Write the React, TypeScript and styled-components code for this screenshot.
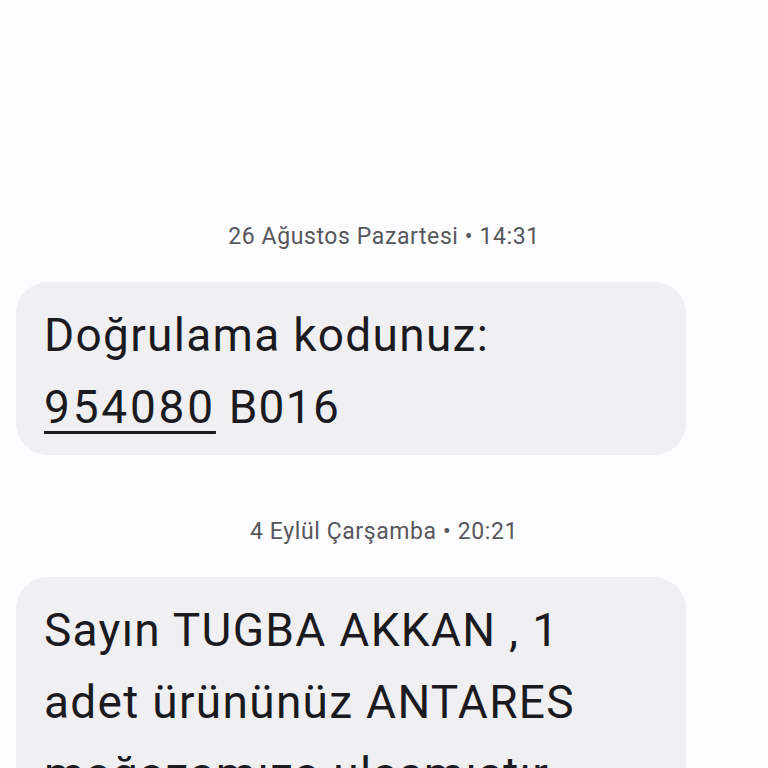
import React from 'react';
import styled, { createGlobalStyle } from 'styled-components';

const GlobalStyle = createGlobalStyle`
  html, body {
    margin: 0;
    padding: 0;
    background: #fdfcff;
    font-family: Roboto, "Noto Sans", "Liberation Sans", sans-serif;
  }
`;

const Thread = styled.div`
  display: flex;
  flex-direction: column;
  gap: 62px;
  padding: 222px 82px 0 16px;
  height: 768px;
  box-sizing: border-box;
  overflow: hidden;
`;

const Group = styled.div`
  display: flex;
  flex-direction: column;
  gap: 30px;
`;

const DateLabel = styled.div`
  text-align: center;
  margin-right: -66px;
  font-size: 23px;
  line-height: 30px;
  letter-spacing: 0.6px;
  color: #57575c;
`;

const Bubble = styled.div`
  background: #f0f0f3;
  border-radius: 32px;
  padding: 17px 28px 12px;
  color: #1b1b1f;
  font-size: 46px;
  line-height: 72px;
  letter-spacing: 1.3px;
`;

const Line = styled.div`
  white-space: nowrap;
`;

const Code = styled.span`
  letter-spacing: 2.8px;
  text-decoration: underline;
  text-decoration-thickness: 3px;
  text-underline-offset: 8px;
`;

type Message = {
  date: string;
  lines: React.ReactNode[];
};

const messages: Message[] = [
  {
    date: '26 Ağustos Pazartesi • 14:31',
    lines: [
      'Doğrulama kodunuz:',
      <>
        <Code>954080</Code> B016
      </>,
    ],
  },
  {
    date: '4 Eylül Çarşamba • 20:21',
    lines: ['Sayın TUGBA AKKAN , 1', 'adet ürününüz ANTARES', 'mağazamıza ulaşmıştır.'],
  },
];

const App = () => {
  return (
    <>
      <GlobalStyle />
      <Thread>
        {messages.map((m, i) => (
          <Group key={i}>
            <DateLabel>{m.date}</DateLabel>
            <Bubble>
              {m.lines.map((line, j) => (
                <Line key={j}>{line}</Line>
              ))}
            </Bubble>
          </Group>
        ))}
      </Thread>
    </>
  );
};

export default App;
